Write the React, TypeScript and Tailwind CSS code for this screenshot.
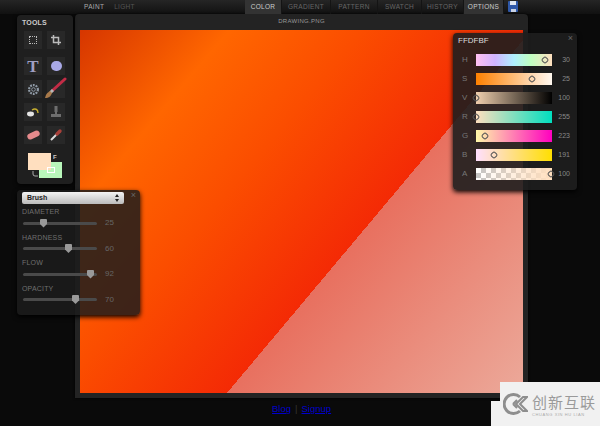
import type { ReactNode } from 'react'

const labelFont = "font-['Liberation_Sans',Arial,sans-serif]"

const tabs = [
  { name: 'COLOR', width: 'w-[37px]', active: true },
  { name: 'GRADIENT', width: 'w-[49px]', active: false },
  { name: 'PATTERN', width: 'w-[47px]', active: false },
  { name: 'SWATCH', width: 'w-[44px]', active: false },
  { name: 'HISTORY', width: 'w-[42px]', active: false },
  { name: 'OPTIONS', width: 'w-[40px]', active: true },
]

const brushSliders = [
  { name: 'DIAMETER', value: 25, left: 20 },
  { name: 'HARDNESS', value: 60, left: 45 },
  { name: 'FLOW', value: 92, left: 67 },
  { name: 'OPACITY', value: 70, left: 52 },
]

const colorBars = [
  { name: 'H', value: 30, left: 69, bar: 'bg-[linear-gradient(90deg,#ffc0f0,#d0b4ff_25%,#b0f0ff_50%,#c0ffc0_72%,#ffdfbf)]' },
  { name: 'S', value: 25, left: 56, bar: 'bg-[linear-gradient(90deg,#ff8000,#fff8f0)]' },
  { name: 'V', value: 100, left: 0, bar: 'bg-[linear-gradient(90deg,#f0cfae,#000)]' },
  { name: 'R', value: 255, left: 0, bar: 'bg-[linear-gradient(90deg,#ffdfbf,#00dfbf)]' },
  { name: 'G', value: 223, left: 9, bar: 'bg-[linear-gradient(90deg,#fff8a8,#ff00bf)]' },
  { name: 'B', value: 191, left: 18, bar: 'bg-[linear-gradient(90deg,#ffdfff,#ffdf00)]' },
  {
    name: 'A',
    value: 100,
    left: 75,
    bar: 'bg-[linear-gradient(90deg,#ffdfbf00,#ffdfbf),repeating-conic-gradient(#c4c4c4_0_25%,#fff_0_50%)] [background-size:100%_100%,10px_10px]',
  },
]

function ToolCell({ children }: { children: ReactNode }) {
  return <div className="w-[18px] h-[18px] bg-[#282828] flex items-center justify-center">{children}</div>
}

function ToolsPanel() {
  return (
    <div className="absolute left-[17px] top-[15px] w-[56px] h-[169px] bg-[#1f1f1f] rounded-sm shadow-[0_1px_4px_#000] pl-[7px] pt-[3px]">
      <div className="text-[7px] leading-[10px] font-bold text-[#ccc] tracking-wide -ml-[2px] mb-[3px]">TOOLS</div>
      <div className="flex gap-[5px]">
        <ToolCell>
          <div className="w-[8px] h-[8px] border border-dotted border-[#bbb]" />
        </ToolCell>
        <ToolCell>
          <svg width="10" height="10" viewBox="0 0 12 12" fill="none" stroke="#bbb" strokeWidth="1.8">
            <path d="M3 0v9h9M0 3h9v9" />
          </svg>
        </ToolCell>
      </div>
      <div className="grid grid-cols-[18px_18px] gap-x-[5px] gap-y-[5px] mt-[8px]">
        <ToolCell>
          <span className="font-['Liberation_Serif',serif] font-bold text-[17px] leading-none text-[#a0a0c4]">T</span>
        </ToolCell>
        <ToolCell>
          <div className="w-[11px] h-[10px] rounded-full bg-[#a9a9e6]" />
        </ToolCell>
        <ToolCell>
          <svg width="13" height="13" viewBox="0 0 13 13" fill="none" stroke="#8f9aa6" strokeWidth="1">
            <circle cx="6.5" cy="6.5" r="1.8" />
            <circle cx="6.5" cy="6.5" r="4.4" strokeDasharray="1.8 1" strokeWidth="2.2" />
          </svg>
        </ToolCell>
        <ToolCell>
          <svg width="24" height="24" viewBox="0 0 24 24" fill="none" className="-mt-[2px] -ml-[2px] shrink-0">
            <path d="M9.5 14.5 22 3" stroke="#c22c46" strokeWidth="3" strokeLinecap="round" />
            <path d="M7.5 16.5 10 14" stroke="#b8b8b8" strokeWidth="3" />
            <path d="M2 22c1-4 2-5 5-7l2 2c-1 3-3 5-7 5z" fill="#a97a4a" />
          </svg>
        </ToolCell>
        <ToolCell>
          <svg width="14" height="12" viewBox="0 0 14 12" fill="none">
            <ellipse cx="4.5" cy="8" rx="3.5" ry="2.4" fill="#e4e4e4" />
            <path d="M6 4c3-2 6-1 6 3" stroke="#c8b030" strokeWidth="1.4" />
          </svg>
        </ToolCell>
        <ToolCell>
          <svg width="12" height="14" viewBox="0 0 12 14" fill="#6e6e6e">
            <path d="M4.5 1h3v6H7v2h4v3H1V9h4V7h-.5z" />
          </svg>
        </ToolCell>
        <ToolCell>
          <div className="w-[13px] h-[6px] rounded-[3px] bg-[#e58a8c] -rotate-[25deg]" />
        </ToolCell>
        <ToolCell>
          <svg width="14" height="14" viewBox="0 0 14 14" fill="none">
            <path d="M2 12 8 6" stroke="#ddd" strokeWidth="2" />
            <path d="M8 6l3-3" stroke="#a8403a" strokeWidth="3.4" strokeLinecap="round" />
          </svg>
        </ToolCell>
      </div>
      {/* fore / background swatches */}
      <div className="relative mt-[9px] w-[40px] h-[26px]">
        <div className="absolute left-[15px] top-[9px] w-[23px] h-[16px] bg-[#b9f7bb]" />
        <div className="absolute left-[4px] top-0 w-[23px] h-[17px] bg-[#ffdfbf]" />
        <div className="absolute left-[23px] top-[14px] w-[8px] h-[6px] border border-white" />
        <span className="absolute left-[29px] top-[1px] text-[6px] leading-[7px] font-bold text-[#ccc]">F</span>
        <svg width="6" height="6" viewBox="0 0 6 6" fill="none" stroke="#aaa" className="absolute left-[8px] top-[18px]">
          <path d="M1 0v3a2 2 0 0 0 2 2h3" />
        </svg>
      </div>
    </div>
  )
}

function BrushPanel() {
  return (
    <div className="absolute left-[17px] top-[190px] w-[123px] h-[125px] bg-[#1c1c1c]/85 rounded-sm shadow-[0_2px_5px_#000] px-[5px] pt-[2px]">
      <span className="absolute right-[4px] top-[1px] text-[9px] leading-[9px] text-[#666]">×</span>
      <div className="w-[102px] h-[12px] rounded-[2px] bg-[linear-gradient(#f4f4f4,#bbb)] flex items-center justify-between px-[5px]">
        <span className="text-[7px] font-bold text-[#222]">Brush</span>
        <svg width="4" height="8" viewBox="0 0 4 8" fill="#222">
          <path d="M2 0 4 3H0zM2 8 0 5h4z" />
        </svg>
      </div>
      <div className="flex flex-col gap-[9.5px] mt-[4px]">
        {brushSliders.map(slider => (
          <div key={slider.name} className="h-[16px]">
            <div className="text-[7px] leading-[7px] text-[#6f6f6f] tracking-wide">{slider.name}</div>
            <div className="flex items-center mt-[4px] h-[8px]">
              <div className="relative w-[74px] h-[3px] ml-[1px] bg-[#4a4a4a] rounded-full">
                <div
                  className="absolute -top-[3px] w-[7px] h-[9px] bg-[#999] rounded-[1px] [clip-path:polygon(0_0,100%_0,100%_60%,50%_100%,0_60%)]"
                  style={{ left: slider.left - 3 }}
                />
              </div>
              <span className="ml-[8px] text-[8px] text-[#666]">{slider.value}</span>
            </div>
          </div>
        ))}
      </div>
    </div>
  )
}

function ColorPanel() {
  return (
    <div className="absolute left-[453px] top-[33px] w-[124px] h-[157px] bg-[#1e1e1e]/90 rounded-sm shadow-[0_2px_5px_#000] pl-[5px] pt-[3px]">
      <span className="absolute right-[4px] top-[1px] text-[9px] leading-[9px] text-[#666]">×</span>
      <div className="text-[8px] leading-[10px] text-[#ddd]">FFDFBF</div>
      <div className="flex flex-col gap-[7px] mt-[8px]">
        {colorBars.map(row => (
          <div key={row.name} className="flex items-center h-[12px]">
            <span className="w-[18px] pl-[4px] text-[8px] text-[#777]">{row.name}</span>
            <div className={`relative w-[76px] h-[12px] ${row.bar}`}>
              <div
                className="absolute top-[3px] w-[6px] h-[6px] rotate-45 rounded-[2px] border border-[#555]"
                style={{ left: row.left - 3 }}
              />
            </div>
            <span className="w-[18px] text-right text-[7px] text-[#888]">{row.value}</span>
          </div>
        ))}
      </div>
    </div>
  )
}

function Watermark() {
  return (
    <>
      <div className="absolute left-[491px] top-[401px] w-[9px] h-[25px] bg-[#f1f1f1]" />
      <div className="absolute left-[500px] top-[382px] w-[100px] h-[44px] bg-[#f1f1f1] flex items-center pl-[3px] gap-[4px]">
        <svg width="25" height="22" viewBox="0 0 25 22" fill="none" stroke="#8e8e8e" className="shrink-0">
          <path d="M17 4A9.5 9.5 0 1 0 17 18" strokeWidth="3" />
          <path d="M24 4h-4l-7 7 7 7h4l-7-7zM10 11l4-4M10 11l4 4" strokeWidth="2" />
        </svg>
        <div className="flex flex-col mt-[3px]">
          <div className="font-['Noto_Sans_CJK_SC',sans-serif] text-[15px] leading-[15px] text-[#9a9a9a] tracking-[1px]">
            创新互联
          </div>
          <div className="mt-[3px] text-[4px] leading-[5px] text-[#aaa] tracking-[0.6px]">CHUANG XIN HU LIAN</div>
        </div>
      </div>
    </>
  )
}

export default function App() {
  return (
    <div className={`relative w-[600px] h-[426px] overflow-hidden bg-[#0a0a0a] ${labelFont}`}>
      {/* top nav */}
      <div className="h-[14px] flex bg-[linear-gradient(#252525,#111)] text-[6.5px] leading-[14px] tracking-[0.3px]">
        <div className="w-[245px] flex pl-[84px] gap-[10px]">
          <span className="text-[#aaa]">PAINT</span>
          <span className="text-[#555]">LIGHT</span>
        </div>
        {tabs.map(tab => (
          <div
            key={tab.name}
            className={`${tab.width} text-center border-r border-[#141414] ${
              tab.active ? 'bg-[#333] text-[#ccc]' : 'text-[#666]'
            }`}
          >
            {tab.name}
          </div>
        ))}
        <div className="ml-[4px] mt-[1px] w-[10px] h-[11px] bg-[#2f58a8] rounded-[1px] flex flex-col items-center justify-between">
          <div className="w-[6px] h-[4px] bg-[#dfe6f2]" />
          <div className="w-[5px] h-[3px] bg-[#c8d2e4]" />
        </div>
      </div>

      {/* canvas window */}
      <div className="ml-[75px] w-[453px] h-[384px] rounded-t-sm bg-[#232323] shadow-[0_0_3px_#000] px-[5px] pb-[5px] flex flex-col">
        <div className="h-[16px] text-center text-[6px] leading-[15px] text-[#999] tracking-[0.3px]">DRAWING.PNG</div>
        <div className="flex-1 bg-[linear-gradient(130deg,#d63600_0%,#ff6600_20%,#fb4d00_38%,#f42a05_60.4%,#e8705f_60.4%,#eca99a_100%)]" />
      </div>

      <div className="mt-[5px] ml-[272px] flex gap-[4px] text-[9.5px] leading-[12px] text-[#0000cc]">
        <a className="underline" href="#">Blog</a>
        <span className="text-[#333]">|</span>
        <a className="underline" href="#">Signup</a>
      </div>

      <ToolsPanel />
      <BrushPanel />
      <ColorPanel />
      <Watermark />
    </div>
  )
}
